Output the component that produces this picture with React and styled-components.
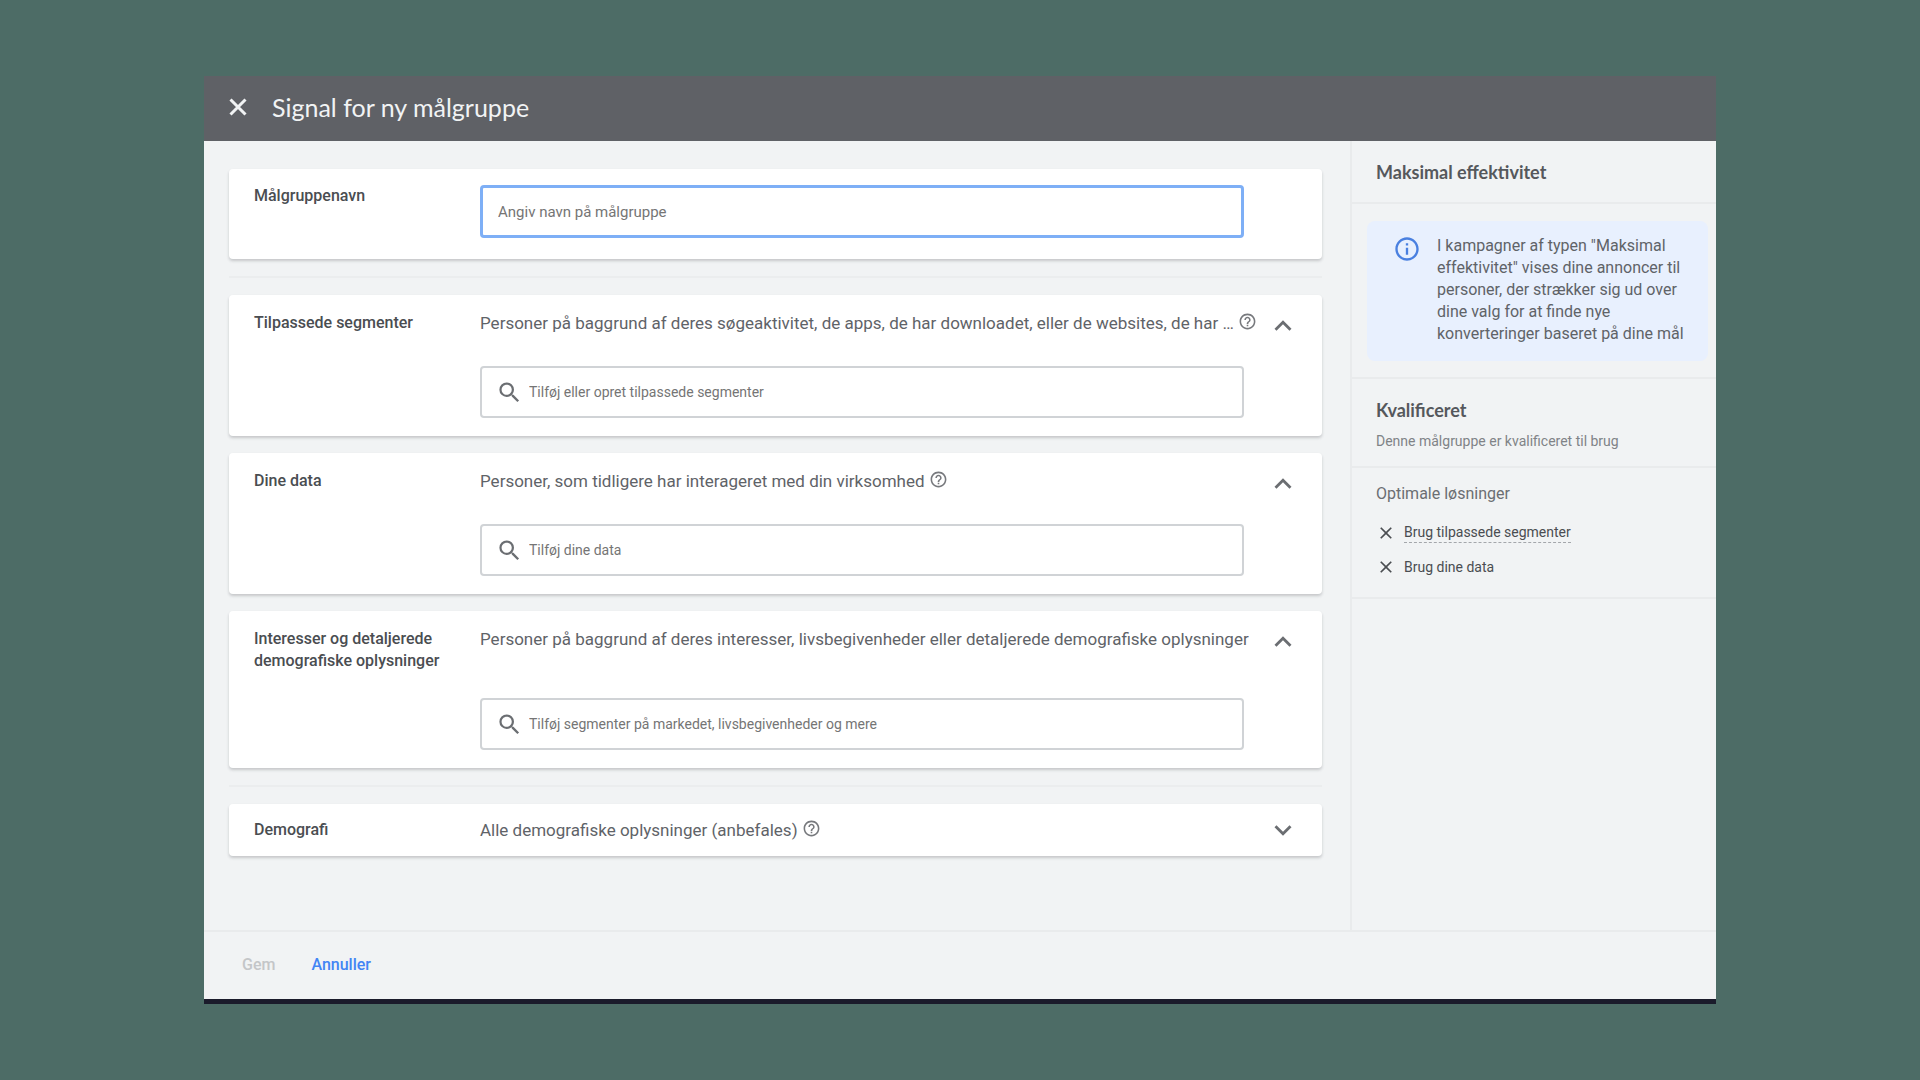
import React, { useState } from "react";
import styled, { createGlobalStyle, css } from "styled-components";
import {
  MdClose,
  MdExpandLess,
  MdExpandMore,
  MdHelpOutline,
  MdInfoOutline,
  MdSearch,
} from "react-icons/md";

const GlobalStyle = createGlobalStyle`
  * {
    box-sizing: border-box;
  }
  body {
    margin: 0;
    background-color: #4d6c66;
    font-family: Roboto, "Liberation Sans", sans-serif;
    font-size: 16px;
    line-height: 22px;
    color: #5f6368;
  }
  button, input {
    font-family: inherit;
  }
  h1, h2, p, ul {
    margin: 0;
    padding: 0;
  }
`;

const Page = styled.div`
  display: flex;
  min-height: 100vh;
  padding: 76px 204px;
`;

const Dialog = styled.div`
  flex: 1;
  min-width: 0;
  display: flex;
  flex-direction: column;
  background-color: #f1f3f4;
  border-bottom: 5px solid #1b1b2b;
`;

const Header = styled.header`
  display: flex;
  align-items: center;
  gap: 20px;
  height: 65px;
  padding: 0 20px 4px;
  background-color: #5f6166;
  color: #f1f3f4;
`;

const IconButton = styled.button`
  display: flex;
  padding: 0;
  border: 0;
  background: none;
  color: inherit;
  cursor: pointer;
`;

const Title = styled.h1`
  font-family: Lato, sans-serif;
  font-size: 25px;
  line-height: 32px;
  font-weight: 400;
`;

const Body = styled.div`
  flex: 1;
  display: grid;
  grid-template-columns: minmax(0, 1fr) 366px;
`;

const Main = styled.main`
  display: flex;
  flex-direction: column;
  gap: 17px;
  padding: 28px 28px 28px 25px;
`;

const Divider = styled.hr`
  width: 100%;
  height: 2px;
  margin: 0;
  border: 0;
  background-color: #ebedee;
`;

//------------------------------------

const Card = styled.section`
  display: grid;
  grid-template-columns: 226px minmax(0, 1fr) 78px;
  padding: ${({ $collapsed }) => ($collapsed ? "12px 0 12px 25px" : "17px 0 18px 25px")};
  border-radius: 4px;
  background-color: #ffffff;
  box-shadow: 0 2px 3px rgba(60, 64, 67, 0.24);
`;

const NameCard = styled(Card)`
  padding: 16px 0 21px 25px;
`;

const Label = styled.label`
  padding-top: ${({ $collapsed }) => ($collapsed ? "3px" : "0")};
  padding-right: 16px;
  font-weight: 500;
  color: #4a4d51;
`;

const Content = styled.div`
  display: flex;
  flex-direction: column;
  gap: 26px;
`;

const Description = styled.div`
  display: flex;
  align-items: flex-start;
  gap: 4px;
  min-height: ${({ $tall }) => ($tall ? "44px" : "28px")};
  padding-top: ${({ $collapsed }) => ($collapsed ? "3px" : "0")};
  font-size: 17px;
  white-space: nowrap;
  svg {
    flex: none;
    color: #77797d;
  }
`;

const Chevron = styled(IconButton)`
  justify-content: center;
  align-items: center;
  height: 28px;
  color: #6b6e72;
`;

const fieldBox = css`
  height: 52px;
  border-radius: 4px;
  background-color: #ffffff;
`;

const NameInput = styled.input`
  ${fieldBox}
  height: 53px;
  width: 100%;
  padding: 0 15px;
  border: 3px solid #7eaff6;
  outline: 0;
  font-size: 15px;
  color: #3c4043;
  ::placeholder {
    color: #6f7276;
    opacity: 1;
  }
`;

const SearchBox = styled.div`
  ${fieldBox}
  display: flex;
  align-items: center;
  gap: 6px;
  padding: 0 14px;
  border: 2px solid #d0d3d6;
  color: #6b6e72;
`;

const SearchInput = styled.input`
  flex: 1;
  min-width: 0;
  padding: 0;
  border: 0;
  outline: 0;
  font-size: 14px;
  color: #3c4043;
  ::placeholder {
    color: #808387;
    opacity: 1;
  }
`;

//------------------------------------

const Aside = styled.aside`
  border-left: 2px solid #e9ebec;
`;

const AsideBlock = styled.div`
  padding: ${({ $pad }) => $pad};
  border-bottom: 2px solid #e9ebec;
`;

const AsideTitle = styled.h2`
  font-family: Lato, sans-serif;
  font-size: 18px;
  line-height: 24px;
  font-weight: 700;
  color: #55585c;
`;

const TipsTitle = styled(AsideTitle)`
  font-family: inherit;
  font-size: 16px;
  font-weight: 400;
  color: #6b6e72;
`;

const Notice = styled.div`
  display: flex;
  align-items: flex-start;
  gap: 16px;
  padding: 14px 8px 16px 26px;
  border-radius: 8px;
  background-color: #e8f0fe;
  svg {
    flex: none;
    color: #4a80e0;
  }
`;

const NoticeText = styled.p`
  white-space: nowrap;
`;

const Small = styled.p`
  margin-top: 8px;
  font-size: 14px;
  color: #808387;
`;

const Tips = styled.ul`
  display: flex;
  flex-direction: column;
  gap: 14px;
  margin-top: 16px;
  list-style: none;
`;

const Tip = styled.li`
  display: flex;
  align-items: center;
  gap: 8px;
  font-size: 14px;
  line-height: 20px;
  color: #4a4d51;
`;

const TipLink = styled.a`
  border-bottom: ${({ $dotted }) => ($dotted ? "1px dashed #a4a7ab" : "0")};
  color: inherit;
  text-decoration: none;
`;

const Footer = styled.footer`
  display: flex;
  align-items: center;
  gap: 36px;
  height: 69px;
  padding: 0 38px 2px;
  border-top: 2px solid #e9ebec;
`;

const FooterButton = styled.button`
  padding: 0;
  border: 0;
  background: none;
  font-size: 16px;
  line-height: 22px;
  font-weight: 500;
  color: ${({ $primary }) => ($primary ? "#4285f4" : "#c4c6c8")};
`;

const Segment = ({ id, label, text, placeholder, help, tall, initialOpen = true }) => {
  const [open, setOpen] = useState(initialOpen);
  return (
    <Card $collapsed={!open}>
      <Label as={placeholder ? "label" : "div"} htmlFor={placeholder ? id : undefined} $collapsed={!open}>
        {label}
      </Label>
      <Content>
        <Description $tall={tall} $collapsed={!open}>
          {text}
          {help && <MdHelpOutline size={19} />}
        </Description>
        {open && placeholder && (
          <SearchBox>
            <MdSearch size={27} />
            <SearchInput id={id} type="text" placeholder={placeholder} />
          </SearchBox>
        )}
      </Content>
      <Chevron type="button" aria-label={label} aria-expanded={open} onClick={() => setOpen(!open)}>
        {open ? <MdExpandLess size={34} /> : <MdExpandMore size={34} />}
      </Chevron>
    </Card>
  );
};

const App = () => (
  <>
    <GlobalStyle />
    <Page>
      <Dialog role="dialog" aria-labelledby="title">
        <Header>
          <IconButton type="button" aria-label="Luk">
            <svg width="28" height="28" viewBox="0 0 28 28" fill="none">
              <path d="M6.5 6.5l15 15M21.5 6.5l-15 15" stroke="currentColor" strokeWidth="3" />
            </svg>
          </IconButton>
          <Title id="title">Signal for ny målgruppe</Title>
        </Header>
        <Body>
          <Main>
            <NameCard>
              <Label htmlFor="name">Målgruppenavn</Label>
              <NameInput id="name" type="text" placeholder="Angiv navn på målgruppe" />
            </NameCard>
            <Divider />
            <Segment
              id="segments"
              label="Tilpassede segmenter"
              text="Personer på baggrund af deres søgeaktivitet, de apps, de har downloadet, eller de websites, de har …"
              placeholder="Tilføj eller opret tilpassede segmenter"
              help
            />
            <Segment
              id="data"
              label="Dine data"
              text="Personer, som tidligere har interageret med din virksomhed"
              placeholder="Tilføj dine data"
              help
            />
            <Segment
              id="interests"
              label="Interesser og detaljerede demografiske oplysninger"
              text="Personer på baggrund af deres interesser, livsbegivenheder eller detaljerede demografiske oplysninger"
              placeholder="Tilføj segmenter på markedet, livsbegivenheder og mere"
              tall
            />
            <Divider />
            <Segment
              id="demographics"
              label="Demografi"
              text="Alle demografiske oplysninger (anbefales)"
              help
              initialOpen={false}
            />
          </Main>
          <Aside>
            <AsideBlock $pad="19px 24px 18px">
              <AsideTitle>Maksimal effektivitet</AsideTitle>
            </AsideBlock>
            <AsideBlock $pad="17px 8px 16px 15px">
              <Notice>
                <MdInfoOutline size={28} />
                <NoticeText>
                  I kampagner af typen "Maksimal
                  <br />
                  effektivitet" vises dine annoncer til
                  <br />
                  personer, der strækker sig ud over
                  <br />
                  dine valg for at finde nye
                  <br />
                  konverteringer baseret på dine mål
                </NoticeText>
              </Notice>
            </AsideBlock>
            <AsideBlock $pad="19px 24px 14px">
              <AsideTitle>Kvalificeret</AsideTitle>
              <Small>Denne målgruppe er kvalificeret til brug</Small>
            </AsideBlock>
            <AsideBlock $pad="14px 24px 20px">
              <TipsTitle>Optimale løsninger</TipsTitle>
              <Tips>
                <Tip>
                  <MdClose size={20} />
                  <TipLink href="#segments" $dotted>
                    Brug tilpassede segmenter
                  </TipLink>
                </Tip>
                <Tip>
                  <MdClose size={20} />
                  <TipLink href="#data">Brug dine data</TipLink>
                </Tip>
              </Tips>
            </AsideBlock>
          </Aside>
        </Body>
        <Footer>
          <FooterButton type="button" disabled>
            Gem
          </FooterButton>
          <FooterButton type="button" $primary>
            Annuller
          </FooterButton>
        </Footer>
      </Dialog>
    </Page>
  </>
);

export default App;
